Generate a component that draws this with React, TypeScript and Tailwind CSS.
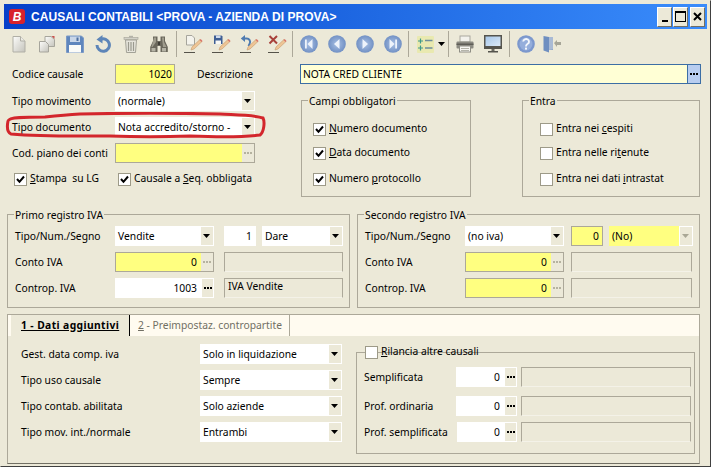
import React from "react";

// small helpers for the XP style controls
function Arrow({ disabled }: { disabled?: boolean }) {
  return (
    <svg width="8" height="5" viewBox="0 0 8 5">
      <polygon points="0,0 7,0 3.5,4" fill={disabled ? "#a9a795" : "#000"} />
    </svg>
  );
}

function Dots({ faded }: { faded?: boolean }) {
  const c = faded ? "bg-[#b5b29f]" : "bg-black";
  return (
    <span className="flex gap-[1px]">
      <span className={`h-[2px] w-[2px] ${c}`}></span>
      <span className={`h-[2px] w-[2px] ${c}`}></span>
      <span className={`h-[2px] w-[2px] ${c}`}></span>
    </span>
  );
}

function Select({ value, w, yellow, disabled }: { value: string; w: string; yellow?: boolean; disabled?: boolean }) {
  return (
    <div className={`flex h-5 ${w} ${yellow ? "bg-[#ffff80]" : "bg-white"}`}>
      <span className="flex-1 pl-[3px] leading-5 whitespace-nowrap overflow-hidden">{value}</span>
      <span className="flex w-[14px] items-center justify-center border border-white bg-[#ece9d8]">
        <Arrow disabled={disabled} />
      </span>
    </div>
  );
}

function Lookup({ value, w, yellow }: { value: string; w: string; yellow?: boolean }) {
  return (
    <div className={`flex h-5 ${w}`}>
      {yellow ? (
        <span className="flex-1 border-y border-l border-[#aca899] bg-[#ffff80] pr-[4px] text-right leading-[18px]">{value}</span>
      ) : (
        <span className="flex-1 bg-white pr-[4px] text-right leading-5">{value}</span>
      )}
      <span
        className={`flex w-[13px] items-center justify-center border ${
          yellow ? "border-[#aca899] border-l-0" : "border-white"
        }`}
      >
        <Dots faded={yellow} />
      </span>
    </div>
  );
}

function ReadOnly({ w, value }: { w: string; value?: string }) {
  return (
    <div className={`h-5 ${w} border border-[#aca899] border-b-[#f4f2e8] pl-[3px] leading-[15px]`}>{value}</div>
  );
}

function Check({ checked, children, className }: { checked?: boolean; children: React.ReactNode; className?: string }) {
  return (
    <div className={`flex h-[14px] items-center gap-[3px] whitespace-nowrap ${className ?? ""}`}>
      <span className="flex h-[13px] w-[13px] shrink-0 items-center justify-center border border-[#9d9a88] bg-white">
        {checked && (
          <svg width="9" height="9" viewBox="0 0 9 9">
            <path d="M1 4 L3.5 6.8 L8 1.5" fill="none" stroke="#000" strokeWidth="2" />
          </svg>
        )}
      </span>
      <span>{children}</span>
    </div>
  );
}

function Group({ title, className, children }: { title: string; className: string; children: React.ReactNode }) {
  return (
    <div className={`relative border border-[#aca899] ${className}`}>
      <span className="absolute top-[-7px] left-[6px] bg-[#ece9d8] px-[1px] leading-[14px] whitespace-nowrap">{title}</span>
      {children}
    </div>
  );
}

function Row({ label, labelW, children }: { label: string; labelW: string; children: React.ReactNode }) {
  return (
    <div className="flex h-5 items-center">
      <span className={`${labelW} shrink-0 pt-[1px] whitespace-nowrap`}>{label}</span>
      {children}
    </div>
  );
}

// toolbar drawings
function NewDoc() {
  return (
    <svg width="18" height="18" viewBox="0 0 18 18">
      <defs>
        <linearGradient id="pg" x1="0" y1="0" x2="1" y2="1">
          <stop offset="0" stopColor="#fdfdfb" />
          <stop offset="1" stopColor="#c4c3bb" />
        </linearGradient>
      </defs>
      <path d="M3 1.5 H10.5 L15 6 V17 H3 Z" fill="url(#pg)" stroke="#b0afa6" />
      <path d="M10.5 1.5 V6 H15" fill="#ecebe4" stroke="#b0afa6" />
    </svg>
  );
}

function CopyDoc() {
  return (
    <svg width="18" height="18" viewBox="0 0 18 18">
      <path d="M7 1.5 H13 L16.5 4.5 V11.5 H7 Z" fill="url(#pg)" stroke="#a6a59c" />
      <path d="M13.5 1 L16.5 1 V4 Z" fill="#c9504c" />
      <path d="M1.5 6.5 H7.5 L10.5 9.5 V17 H1.5 Z" fill="url(#pg)" stroke="#a6a59c" />
    </svg>
  );
}

function Save() {
  return (
    <svg width="18" height="18" viewBox="0 0 18 18">
      <path d="M0.5 1 H15.5 L17.5 3 V17.5 H0.5 Z" fill="#5f86bd" stroke="#7c9ac6" />
      <rect x="4" y="1.5" width="10" height="5.5" fill="#c9d6e8" />
      <rect x="10.5" y="2.5" width="2" height="3.5" fill="#4d6f9f" />
      <rect x="3" y="10" width="12" height="7.5" fill="#fbfbf8" />
    </svg>
  );
}

function Undo() {
  return (
    <svg width="18" height="18" viewBox="0 0 18 18">
      <path d="M6.5 4.5 A6.2 6.2 0 1 1 3 10" fill="none" stroke="#5d85b8" strokeWidth="3" />
      <polygon points="8.5,0 8.5,8.5 2.5,4.5" fill="#5d85b8" />
    </svg>
  );
}

function Trash() {
  return (
    <svg width="16" height="18" viewBox="0 0 16 18">
      <rect x="1" y="2.5" width="14" height="2" fill="#d2d1c7" stroke="#a3a297" strokeWidth="0.6" />
      <rect x="6" y="0.8" width="4" height="1.6" fill="#b3b2a8" />
      <path d="M2.5 5 H13.5 L12.5 17.5 H3.5 Z" fill="#e6e5dc" stroke="#a3a297" />
      <path d="M5.5 7 V16 M8 7 V16 M10.5 7 V16" stroke="#9a998e" strokeWidth="1.2" />
    </svg>
  );
}

function Binoculars() {
  return (
    <svg width="18" height="18" viewBox="0 0 18 18">
      <path d="M3 1.5 H7.5 V6 H10.5 V1.5 H15 V6 L17.8 12 V17 H10.5 V11 H7.5 V17 H0.2 V12 L3 6 Z" fill="#6b685c" />
      <path d="M4 2.5 H6 V7 L2.5 12 H1.5 Z" fill="#a09d8e" />
      <path d="M12 2.5 H14 V7 L16.5 12 H13 Z" fill="#a09d8e" />
      <rect x="1.5" y="13" width="4" height="3.5" fill="#b5b3a5" />
      <rect x="12" y="13" width="4" height="3.5" fill="#b5b3a5" />
      <rect x="8" y="7" width="2" height="3" fill="#3f3d36" />
    </svg>
  );
}

function Pencil() {
  return (
    <g>
      <path d="M7 15 L8 12 L16 4.5 L18 6.5 L10 14 Z" fill="#eec596" stroke="#c69a6c" strokeWidth="0.6" />
      <path d="M15.5 5 L17.5 7 L18.5 6 L16.8 4 Z" fill="#d9756a" />
      <line x1="0" y1="17.5" x2="11" y2="17.5" stroke="#55534a" strokeWidth="1" />
    </g>
  );
}

function EditDoc() {
  return (
    <svg width="19" height="18" viewBox="0 0 19 18">
      <path d="M2.5 0.5 H8 L10.5 3 V10 H2.5 Z" fill="#f4f3ec" stroke="#a6a59c" />
      <Pencil />
    </svg>
  );
}

function EditSave() {
  return (
    <svg width="19" height="18" viewBox="0 0 19 18">
      <path d="M2 0.5 H9.5 L10.5 1.5 V9 H2 Z" fill="#3f5f94" />
      <rect x="4" y="0.5" width="4.5" height="2.5" fill="#cfdaeb" />
      <rect x="3.5" y="5.5" width="5.5" height="3.5" fill="#f8f8f4" />
      <Pencil />
    </svg>
  );
}

function EditUndo() {
  return (
    <svg width="19" height="18" viewBox="0 0 19 18">
      <path d="M4 3.5 H6.5 A3.5 3.5 0 0 1 9.5 9 L8.5 11" fill="none" stroke="#4f7bb0" strokeWidth="2" />
      <polygon points="5,0 5,7 0.8,3.5" fill="#4f7bb0" />
      <Pencil />
    </svg>
  );
}

function EditDelete() {
  return (
    <svg width="19" height="18" viewBox="0 0 19 18">
      <path d="M1.5 1 L9 8.5 M9 1 L1.5 8.5" stroke="#a8413a" strokeWidth="2" />
      <Pencil />
    </svg>
  );
}

function Nav({ type }: { type: "first" | "prev" | "next" | "last" }) {
  return (
    <svg width="18" height="18" viewBox="0 0 18 18">
      <defs>
        <radialGradient id="nv" cx="0.5" cy="0.5" r="0.55">
          <stop offset="0" stopColor="#a9c0e4" />
          <stop offset="1" stopColor="#6c8cc1" />
        </radialGradient>
      </defs>
      <circle cx="9" cy="9" r="8.8" fill="url(#nv)" />
      {type === "first" && (
        <g fill="#eef3fb">
          <rect x="5" y="4.5" width="1.8" height="9" />
          <polygon points="12.5,4 12.5,14 7.5,9" />
        </g>
      )}
      {type === "prev" && <polygon points="11.5,4 11.5,14 6,9" fill="#eef3fb" />}
      {type === "next" && <polygon points="6.5,4 6.5,14 12,9" fill="#eef3fb" />}
      {type === "last" && (
        <g fill="#eef3fb">
          <rect x="11.2" y="4.5" width="1.8" height="9" />
          <polygon points="5.5,4 5.5,14 10.5,9" />
        </g>
      )}
    </svg>
  );
}

function ListIcon() {
  return (
    <svg width="17" height="17" viewBox="0 0 17 17">
      <rect x="0" y="0" width="17" height="17" rx="1" fill="#e9e9b0" />
      <path d="M1 5 H6 M3.5 2.5 V7.5 M1 12 H6 M3.5 9.5 V14.5" stroke="#3f9a8a" strokeWidth="1.2" />
      <path d="M8 4.5 H15.5 M8 12 H15.5" stroke="#6e8e9c" strokeWidth="1.4" />
    </svg>
  );
}

function Printer() {
  return (
    <svg width="18" height="18" viewBox="0 0 18 18">
      <rect x="4" y="1" width="10" height="6" fill="#f3f2ec" stroke="#a9a89e" />
      <rect x="0.5" y="6.5" width="17" height="7" rx="1" fill="#8c8b82" />
      <rect x="0.5" y="8.5" width="17" height="1.5" fill="#5e5d56" />
      <rect x="3.5" y="11" width="11" height="6" fill="#f7f6f1" stroke="#8f8e85" />
      <path d="M5 13.5 H13 M5 15.5 H13" stroke="#b5b4aa" />
    </svg>
  );
}

function Monitor() {
  return (
    <svg width="18" height="18" viewBox="0 0 18 18">
      <defs>
        <linearGradient id="sc" x1="0" y1="0" x2="1" y2="1">
          <stop offset="0" stopColor="#a8c8ea" />
          <stop offset="1" stopColor="#dbe9f7" />
        </linearGradient>
      </defs>
      <rect x="0" y="0" width="18" height="14" fill="#55544d" />
      <rect x="1.5" y="1.5" width="15" height="9.5" fill="url(#sc)" />
      <rect x="7.5" y="14" width="3" height="2" fill="#6b6a62" />
      <rect x="4" y="16" width="10" height="1.5" fill="#55544d" />
    </svg>
  );
}

function Help() {
  return (
    <svg width="18" height="18" viewBox="0 0 18 18">
      <circle cx="9" cy="9" r="8.8" fill="#7c98cd" />
      <circle cx="9" cy="9" r="6.5" fill="#95aedb" />
      <path d="M6.2 6.5 A2.9 2.6 0 1 1 10.4 9 C9.3 9.7 9 10 9 11.5" fill="none" stroke="#f4f7fc" strokeWidth="1.9" />
      <rect x="8" y="12.6" width="2" height="2" fill="#f4f7fc" />
    </svg>
  );
}

function ExitDoor() {
  return (
    <svg width="18" height="18" viewBox="0 0 18 18">
      <path d="M0.5 1 L6 2 H10 V15 L6 14.5 V17.5 L0.5 15.5 Z" fill="#6f8fc0" />
      <path d="M6 2 H10 V14.5 H6 Z" fill="#a9bad4" />
      <polygon points="11,8 14,5 14,7 18,7 18,10 14,10 14,12" fill="#a6a597" />
    </svg>
  );
}

function Tool({ children, w = "w-7" }: { children: React.ReactNode; w?: string }) {
  return <div className={`flex h-full ${w} items-center justify-center`}>{children}</div>;
}

function Sep({ ml }: { ml: string }) {
  return <div className={`${ml} mr-[2px] h-[26px] w-[1px] self-center bg-[#aca899]`}></div>;
}

function WinBtn({ children, className }: { children: React.ReactNode; className?: string }) {
  return (
    <div className={`flex h-[20px] w-[15px] items-center justify-center border-t border-l border-white bg-[#ece9d8] border-r border-b border-r-[#716f64] border-b-[#716f64] ${className ?? ""}`}>
      {children}
    </div>
  );
}

export default function App() {
  return (
    <div className="relative h-[467px] w-[711px] overflow-hidden bg-[#ece9d8] font-['Noto_Sans',sans-serif] text-[10.3px] text-black">
      <div className="h-full border-t border-l border-[#ece9d8] border-r-[#404040] border-r border-b border-b-[#404040]">
        <div className="h-full border-t-[3px] border-l-[3px] border-r-[3px] border-[#ece9d8] pb-0">
          {/* title bar */}
          <div className="flex h-[25px] items-center bg-gradient-to-r from-[#0740c9] to-[#3a8cfb] pr-[2px] pl-[5px]">
            <div className="flex h-[15px] w-[16px] items-center justify-center rounded-[3px] bg-[#d8222c] font-['Liberation_Sans',sans-serif] text-[12px] leading-none font-bold text-white italic">
              B
            </div>
            <span className="ml-[6px] flex-1 font-['Liberation_Sans',sans-serif] text-[12px] font-bold tracking-[0.05px] whitespace-nowrap text-white">
              CAUSALI CONTABILI &lt;PROVA - AZIENDA DI PROVA&gt;
            </span>
            <WinBtn>
              <span className="mt-[8px] h-[2px] w-[6px] bg-black"></span>
            </WinBtn>
            <WinBtn className="ml-[1px]">
              <span className="h-[11px] w-[11px] border border-t-2 border-black"></span>
            </WinBtn>
            <WinBtn className="ml-[2px]">
              <svg width="9" height="9" viewBox="0 0 9 9">
                <path d="M1 1 L8 8 M8 1 L1 8" stroke="#000" strokeWidth="2" />
              </svg>
            </WinBtn>
          </div>

          {/* toolbar */}
          <div className="flex h-[30px] items-center pl-[1px]">
            <Tool><NewDoc /></Tool>
            <Tool><CopyDoc /></Tool>
            <Tool><Save /></Tool>
            <Tool><Undo /></Tool>
            <Tool><Trash /></Tool>
            <Tool><Binoculars /></Tool>
            <Sep ml="ml-[3px]" />
            <Tool><EditDoc /></Tool>
            <Tool><EditSave /></Tool>
            <Tool><EditUndo /></Tool>
            <Tool><EditDelete /></Tool>
            <Sep ml="ml-[1px]" />
            <Tool><Nav type="first" /></Tool>
            <Tool><Nav type="prev" /></Tool>
            <Tool><Nav type="next" /></Tool>
            <Tool><Nav type="last" /></Tool>
            <Sep ml="ml-[1px]" />
            <div className="flex h-full w-[36px] items-center pl-[6px]">
              <ListIcon />
              <span className="ml-[4px]"><Arrow /></span>
            </div>
            <Sep ml="ml-[1px]" />
            <Tool><Printer /></Tool>
            <Tool><Monitor /></Tool>
            <Sep ml="ml-[2px]" />
            <Tool><Help /></Tool>
            <Tool w="w-6"><ExitDoor /></Tool>
          </div>

          <div className="pr-[6px] pl-[3px]">
            {/* codice + descrizione */}
            <div className="mt-[5px] flex h-5 items-center pl-[5px]">
              <span className="w-[103px] shrink-0 pt-[1px]">Codice causale</span>
              <span className="h-5 w-[60px] border border-[#aca899] bg-[#ffff80] pr-[2px] text-right leading-[18px]">1020</span>
              <span className="ml-[22px] w-[103px] shrink-0 pt-[1px]">Descrizione</span>
              <div className="flex h-5 flex-1 border border-[#3c6ea5]">
                <span className="flex-1 bg-[#ffffd5] pl-[2px] leading-[18px]">NOTA CRED CLIENTE</span>
                <span className="flex w-[13px] items-center justify-center border-l border-[#3c6ea5] bg-[#b8cdf0]">
                  <Dots />
                </span>
              </div>
            </div>

            {/* tipo documento + gruppi */}
            <div className="mt-[7px] flex items-start">
              <div className="ml-[5px] flex w-[243px] shrink-0 flex-col gap-[6px]">
                <Row label="Tipo movimento" labelW="w-[103px]"><Select value="(normale)" w="w-[140px]" /></Row>
                <Row label="Tipo documento" labelW="w-[103px]"><Select value="Nota accredito/storno -" w="w-[140px]" /></Row>
                <Row label="Cod. piano dei conti" labelW="w-[103px]"><Lookup value="" w="w-[140px]" yellow /></Row>
                <div className="mt-[3px] flex">
                  <Check checked className="ml-[2px] w-[104px]">
                    <u>S</u>tampa&nbsp; su LG
                  </Check>
                  <Check checked>
                    Causale a <u>S</u>eq. obbligata
                  </Check>
                </div>
              </div>

              <Group title="Campi obbligatori" className="mt-[9px] ml-[46px] h-[97px] w-[170px]">
                <div className="flex flex-col pt-[21px] pl-[11px]">
                  <Check checked><u>N</u>umero documento</Check>
                  <Check checked className="mt-[10px]"><u>D</u>ata documento</Check>
                  <Check checked className="mt-[12px]">Numero <u>p</u>rotocollo</Check>
                </div>
              </Group>

              <Group title="Entra" className="mt-[9px] ml-[51px] h-[97px] w-[178px]">
                <div className="flex flex-col pt-[21px] pl-[17px]">
                  <Check>Entra nei <u>c</u>espiti</Check>
                  <Check className="mt-[10px]">Entra nelle ri<u>t</u>enute</Check>
                  <Check className="mt-[12px]">Entra nei dati <u>i</u>ntrastat</Check>
                </div>
              </Group>
            </div>

            {/* registri iva */}
            <div className="mt-[17px] flex gap-[7px]">
              <Group title="Primo registro IVA" className="h-[94px] w-[343px]">
                <div className="flex flex-col gap-[6px] pt-[11px] pl-[7px]">
                  <Row label="Tipo/Num./Segno" labelW="w-[100px]">
                    <Select value="Vendite" w="w-[99px]" />
                    <span className="ml-[10px] h-5 w-[32px] bg-white pr-[4px] text-right leading-5">1</span>
                    <span className="ml-[6px]"><Select value="Dare" w="w-[81px]" /></span>
                  </Row>
                  <Row label="Conto IVA" labelW="w-[100px]">
                    <Lookup value="0" w="w-[99px]" yellow />
                    <span className="ml-[10px]"><ReadOnly w="w-[119px]" /></span>
                  </Row>
                  <Row label="Controp. IVA" labelW="w-[100px]">
                    <Lookup value="1003" w="w-[99px]" />
                    <span className="ml-[10px]"><ReadOnly w="w-[119px]" value="IVA Vendite" /></span>
                  </Row>
                </div>
              </Group>

              <Group title="Secondo registro IVA" className="h-[94px] w-[343px]">
                <div className="flex flex-col gap-[6px] pt-[11px] pl-[7px]">
                  <Row label="Tipo/Num./Segno" labelW="w-[100px]">
                    <Select value="(no iva)" w="w-[99px]" />
                    <span className="ml-[7px] h-5 w-[32px] border border-[#aca899] bg-[#ffff80] pr-[3px] text-right leading-[18px]">0</span>
                    <span className="ml-[6px]"><Select value="(No)" w="w-[84px]" yellow disabled /></span>
                  </Row>
                  <Row label="Conto IVA" labelW="w-[100px]">
                    <Lookup value="0" w="w-[99px]" yellow />
                    <span className="ml-[7px]"><ReadOnly w="w-[121px]" /></span>
                  </Row>
                  <Row label="Controp. IVA" labelW="w-[100px]">
                    <Lookup value="0" w="w-[99px]" yellow />
                    <span className="ml-[7px]"><ReadOnly w="w-[121px]" /></span>
                  </Row>
                </div>
              </Group>
            </div>

            {/* pannello a schede */}
            <div className="mt-[6px] h-[150px] w-[693px] border border-[#aca899] border-b-[#716f64]">
              <div className="flex h-[21px] items-center bg-[#fffbf0] pl-[3px]">
                <div className="flex h-full w-[119px] items-center border-r border-black bg-[#ece9d8] pl-[10px] font-bold tracking-[0.4px] whitespace-nowrap">
                  <span className="underline">1 - Dati aggiuntivi</span>
                </div>
                <div className="flex h-full w-[160px] items-center border-r border-[#aca899] pl-[8px] whitespace-nowrap text-[#716f64]">
                  <span><u>2</u> - Preimpostaz. contropartite</span>
                </div>
              </div>

              <div className="flex items-start">
                <div className="flex w-[334px] shrink-0 flex-col gap-[6px] pt-[8px] pl-[13px]">
                  <Row label="Gest. data comp. iva" labelW="w-[179px]"><Select value="Solo in liquidazione" w="w-[142px]" /></Row>
                  <Row label="Tipo uso causale" labelW="w-[179px]"><Select value="Sempre" w="w-[142px]" /></Row>
                  <Row label="Tipo contab. abilitata" labelW="w-[179px]"><Select value="Solo aziende" w="w-[142px]" /></Row>
                  <Row label="Tipo mov. int./normale" labelW="w-[179px]"><Select value="Entrambi" w="w-[142px]" /></Row>
                </div>

                <div className="relative mt-[16px] ml-[14px] h-[102px] w-[339px] border border-[#aca899]">
                  <div className="absolute top-[-8px] left-[8px]">
                    <Check><u>R</u>ilancia altre causali</Check>
                  </div>
                  <div className="pt-[14px] pl-[7px]">
                    <Row label="Semplificata" labelW="w-[92px]">
                      <Lookup value="0" w="w-[61px]" />
                      <span className="ml-[4px]"><ReadOnly w="w-[170px]" /></span>
                    </Row>
                    <div className="mt-[9px]">
                      <Row label="Prof. ordinaria" labelW="w-[92px]">
                        <Lookup value="0" w="w-[61px]" />
                        <span className="ml-[4px]"><ReadOnly w="w-[170px]" /></span>
                      </Row>
                    </div>
                    <div className="mt-[6px]">
                      <Row label="Prof. semplificata" labelW="w-[93px]">
                        <Lookup value="0" w="w-[60px]" />
                        <span className="ml-[4px]"><ReadOnly w="w-[170px]" /></span>
                      </Row>
                    </div>
                  </div>
                </div>
              </div>
            </div>
          </div>
        </div>
      </div>

      {/* annotazione rossa a mano */}
      <svg className="absolute top-[112px] left-[5px]" width="262" height="27" viewBox="0 0 262 27">
        <path
          d="M40 5 C20 5 4 5 3 9 C2 14 2 20 6 22 C40 25 80 24 105 24 C130 25 160 25 185 24 C210 25 240 25 255 23 C259 20 260 10 258 6 C250 3 235 3 215 2 C170 1 120 1 75 2 C60 3 50 4 40 5 Z"
          fill="none"
          stroke="#d3262c"
          strokeWidth="3"
        />
      </svg>
    </div>
  );
}
